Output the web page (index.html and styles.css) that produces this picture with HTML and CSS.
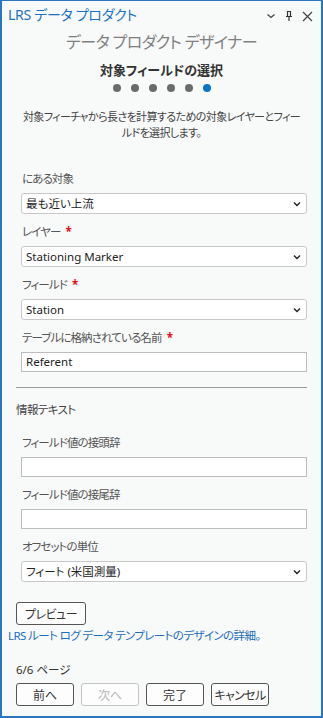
FILE: index.html
```html
<!DOCTYPE html>
<html lang="ja">
<head>
  <meta charset="UTF-8">
  <meta name="viewport" content="width=device-width, initial-scale=1">
  <title>LRS データ プロダクト</title>
  <link rel="stylesheet" href="styles.css">
</head>
<body>

  <div class="pane">
    <!-- タイトルバー -->
    <div class="titlebar">
      <span class="pane-title">LRS データ プロダクト</span>
      <div class="pane-tools">
        <svg width="10" height="10" viewBox="0 0 10 10"><polyline points="1.5,3.5 5,6.5 8.5,3.5" fill="none" stroke="#444" stroke-width="1.3"/></svg>
        <svg width="10" height="12" viewBox="0 0 10 12"><path d="M3 1.5h4M3.5 1.5v5M6.5 1.5v5M2 6.5h6M5 6.5v4.5" fill="none" stroke="#333" stroke-width="1.2"/></svg>
        <svg width="11" height="11" viewBox="0 0 11 11"><path d="M1 1l9 9M10 1l-9 9" fill="none" stroke="#444" stroke-width="1.2"/></svg>
      </div>
    </div>

    <div class="wizard-title">データ プロダクト デザイナー</div>
    <div class="step-title">対象フィールドの選択</div>
    <div class="dots">
      <span class="dot"></span>
      <span class="dot"></span>
      <span class="dot"></span>
      <span class="dot"></span>
      <span class="dot"></span>
      <span class="dot active"></span>
    </div>
    <p class="desc">対象フィーチャから長さを計算するための対象レイヤーとフィー<br>ルドを選択します。</p>

    <!-- フォーム -->
    <div class="form">
      <div class="field first">
        <div class="label">にある対象</div>
        <div class="select">最も近い上流<svg class="chev" width="10" height="10" viewBox="0 0 10 10"><polyline points="2,3.5 5,6.5 8,3.5" fill="none" stroke="#222" stroke-width="1.4"/></svg></div>
      </div>
      <div class="field">
        <div class="label">レイヤー <span class="req">*</span></div>
        <div class="select">Stationing Marker<svg class="chev" width="10" height="10" viewBox="0 0 10 10"><polyline points="2,3.5 5,6.5 8,3.5" fill="none" stroke="#222" stroke-width="1.4"/></svg></div>
      </div>
      <div class="field">
        <div class="label">フィールド <span class="req">*</span></div>
        <div class="select">Station<svg class="chev" width="10" height="10" viewBox="0 0 10 10"><polyline points="2,3.5 5,6.5 8,3.5" fill="none" stroke="#222" stroke-width="1.4"/></svg></div>
      </div>
      <div class="field">
        <div class="label">テーブルに格納されている名前 <span class="req">*</span></div>
        <div class="textbox">Referent</div>
      </div>

      <hr class="divider">

      <div class="section-head">情報テキスト</div>
      <div class="field spaced">
        <div class="label">フィールド値の接頭辞</div>
        <div class="textbox"></div>
      </div>
      <div class="field">
        <div class="label">フィールド値の接尾辞</div>
        <div class="textbox"></div>
      </div>
      <div class="field">
        <div class="label">オフセットの単位</div>
        <div class="select">フィート (米国測量)<svg class="chev" width="10" height="10" viewBox="0 0 10 10"><polyline points="2,3.5 5,6.5 8,3.5" fill="none" stroke="#222" stroke-width="1.4"/></svg></div>
      </div>
    </div>

    <button class="btn preview">プレビュー</button>
    <a class="help-link">LRS ルート ログ データ テンプレートのデザインの詳細。</a>

    <div class="page-count">6/6 ページ</div>
    <div class="nav-buttons">
      <button class="btn">前へ</button>
      <button class="btn" disabled>次へ</button>
      <button class="btn">完了</button>
      <button class="btn">キャンセル</button>
    </div>
  </div>

</body>
</html>
```

FILE: styles.css
```css
/* Reset */
* {
  margin: 0;
  padding: 0;
  box-sizing: border-box;
}
body {
  font-family: "Noto Sans", "Noto Sans CJK JP", sans-serif;
  font-feature-settings: "palt";
  font-size: 12px;
  color: #222;
  background: #ffffff;
}
/* Pane */
.pane {
  width: 323px;
  height: 718px;
  border: 2px solid #2a76c0;
  border-top-width: 1px;
  background: #f8f9f9;
  overflow: hidden;
}
.titlebar {
  height: 28px;
  display: flex;
  align-items: center;
  justify-content: space-between;
  padding: 0 8px 0 6px;
}
.pane-title {
  font-size: 14px;
  letter-spacing: -0.3px;
  color: #1a72c2;
  line-height: 28px;
}
.pane-tools {
  display: flex;
  align-items: center;
  gap: 8px;
  margin-top: 2px;
}
.wizard-title {
  height: 26px;
  line-height: 26px;
  text-align: center;
  font-size: 16px;
  letter-spacing: -0.6px;
  color: #808080;
}
.step-title {
  margin-top: 5px;
  line-height: 20px;
  text-align: center;
  font-size: 13px;
  font-weight: bold;
  color: #333;
}
.dots {
  margin-top: 4px;
  height: 8px;
  display: flex;
  justify-content: center;
  gap: 10px;
}
.dot {
  width: 8px;
  height: 8px;
  border-radius: 50%;
  background: #6b6b6b;
}
.dot.active {
  background: #0a74c8;
}
.desc {
  margin-top: 17px;
  text-align: center;
  line-height: 16px;
  font-size: 11px;
  letter-spacing: -0.6px;
  color: #444;
}
/* Form */
.form {
  padding: 0 14px 0 14px;
}
.field {
  margin-top: 10px;
  padding-left: 5px;
}
.field.first {
  margin-top: 30px;
}
.field.spaced {
  margin-top: 17px;
}
.label {
  line-height: 16px;
  font-size: 11.5px;
  letter-spacing: -0.9px;
  color: #555;
  padding-left: 1px;
  margin-bottom: 6px;
}
.req {
  color: #e01010;
  font-weight: bold;
  margin-left: 3px;
}
.select {
  position: relative;
  height: 21px;
  line-height: 19px;
  font-size: 11.5px;
  background: #fff;
  border: 1px solid #c8c8c8;
  border-radius: 3px;
  padding-left: 4px;
  color: #222;
}
.chev {
  position: absolute;
  right: 4px;
  top: 5px;
}
.textbox {
  height: 20px;
  line-height: 18px;
  font-size: 11.5px;
  background: #fff;
  border: 1px solid #bdbdbd;
  padding-left: 4px;
  color: #222;
}
.divider {
  margin-top: 15px;
  border: none;
  border-top: 1px solid #9a9a9a;
}
.section-head {
  margin-top: 14px;
  line-height: 16px;
  font-size: 11.5px;
  letter-spacing: -0.6px;
  color: #444;
}
/* Buttons */
.btn {
  font-family: inherit;
  font-feature-settings: "palt";
  font-size: 12px;
  height: 23px;
  width: 58px;
  background: #fdfdfd;
  border: 1px solid #555;
  border-radius: 3px;
  color: #333;
}
.btn:disabled {
  border-color: #c4c4c4;
  color: #b8b8b8;
}
.preview {
  display: block;
  margin: 20px 0 0 14px;
  width: 70px;
  letter-spacing: -0.5px;
}
.help-link {
  display: block;
  margin: 3px 0 0 6px;
  line-height: 16px;
  color: #1b6ec0;
  font-size: 11.5px;
  letter-spacing: -0.6px;
}
.page-count {
  margin: 18px 0 0 14px;
  line-height: 16px;
  font-size: 11.5px;
  color: #333;
}
.nav-buttons {
  margin: 5px 0 0 14px;
  display: flex;
  gap: 7px;
}
.nav-buttons .btn:last-child {
  letter-spacing: -0.6px;
}
```
